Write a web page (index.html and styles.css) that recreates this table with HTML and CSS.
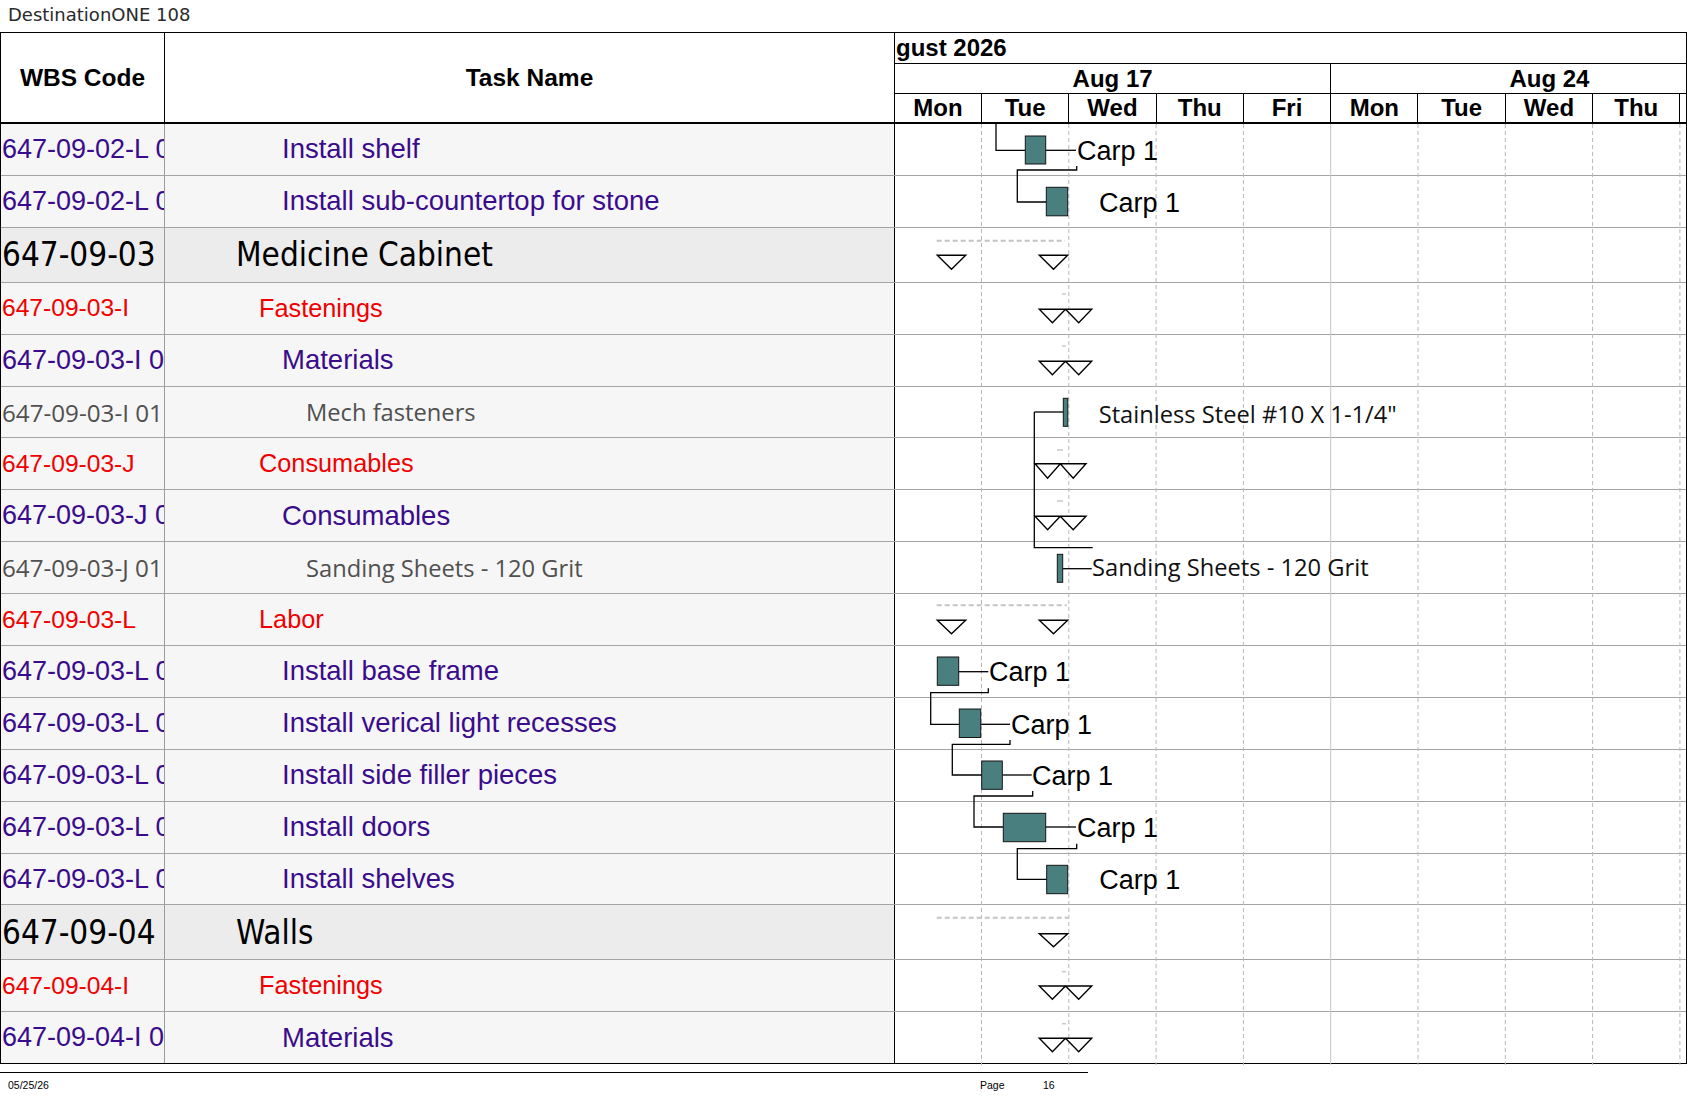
FILE: index.html
```html
<!DOCTYPE html>
<html lang="en">
<head>
<meta charset="utf-8">
<title>DestinationONE 108</title>
<link rel="stylesheet" href="styles.css">
</head>
<body>
<div class="title">DestinationONE 108</div>
<div class="gantt">
  <div class="head">
    <div class="h-wbs">WBS Code</div>
    <div class="h-task">Task Name</div>
    <div class="h-chart">
      <div class="month">gust 2026</div>
      <div class="weeks">
        <div class="wk">Aug 17</div>
        <div class="wk wk-last"><span class="wk-in">Aug 24</span></div>
      </div>
      <div class="days">
        <div class="d">Mon</div><div class="d">Tue</div><div class="d">Wed</div><div class="d">Thu</div><div class="d">Fri</div>
        <div class="d">Mon</div><div class="d">Tue</div><div class="d">Wed</div><div class="d">Thu</div><div class="d d-end"></div>
      </div>
    </div>
  </div>
  <div class="body">
    <div class="row purple"><div class="wbs">647-09-02-L 01</div><div class="task lv3">Install shelf</div><div class="chart"></div></div>
    <div class="row purple"><div class="wbs">647-09-02-L 01</div><div class="task lv3">Install sub-countertop for stone</div><div class="chart"></div></div>
    <div class="row sum"><div class="wbs">647-09-03</div><div class="task lv1">Medicine Cabinet</div><div class="chart"></div></div>
    <div class="row red"><div class="wbs">647-09-03-I</div><div class="task lv2">Fastenings</div><div class="chart"></div></div>
    <div class="row purple"><div class="wbs">647-09-03-I 01</div><div class="task lv3">Materials</div><div class="chart"></div></div>
    <div class="row gray"><div class="wbs">647-09-03-I 01</div><div class="task lv4">Mech fasteners</div><div class="chart"></div></div>
    <div class="row red"><div class="wbs">647-09-03-J</div><div class="task lv2">Consumables</div><div class="chart"></div></div>
    <div class="row purple"><div class="wbs">647-09-03-J 01</div><div class="task lv3">Consumables</div><div class="chart"></div></div>
    <div class="row gray"><div class="wbs">647-09-03-J 01</div><div class="task lv4">Sanding Sheets - 120 Grit</div><div class="chart"></div></div>
    <div class="row red"><div class="wbs">647-09-03-L</div><div class="task lv2">Labor</div><div class="chart"></div></div>
    <div class="row purple"><div class="wbs">647-09-03-L 01</div><div class="task lv3">Install base frame</div><div class="chart"></div></div>
    <div class="row purple"><div class="wbs">647-09-03-L 02</div><div class="task lv3">Install verical light recesses</div><div class="chart"></div></div>
    <div class="row purple"><div class="wbs">647-09-03-L 03</div><div class="task lv3">Install side filler pieces</div><div class="chart"></div></div>
    <div class="row purple"><div class="wbs">647-09-03-L 04</div><div class="task lv3">Install doors</div><div class="chart"></div></div>
    <div class="row purple"><div class="wbs">647-09-03-L 05</div><div class="task lv3">Install shelves</div><div class="chart"></div></div>
    <div class="row sum"><div class="wbs">647-09-04</div><div class="task lv1">Walls</div><div class="chart"></div></div>
    <div class="row red"><div class="wbs">647-09-04-I</div><div class="task lv2">Fastenings</div><div class="chart"></div></div>
    <div class="row purple"><div class="wbs">647-09-04-I 01</div><div class="task lv3">Materials</div><div class="chart"></div></div>

    <svg class="overlay" width="791" height="941" viewBox="0 0 791 941" xmlns="http://www.w3.org/2000/svg">
      <g class="grid">
        <line x1="86.5" y1="0" x2="86.5" y2="941"/>
        <line x1="173.8" y1="0" x2="173.8" y2="941"/>
        <line x1="261.1" y1="0" x2="261.1" y2="941"/>
        <line x1="348.4" y1="0" x2="348.4" y2="941"/>
        <line x1="523" y1="0" x2="523" y2="941"/>
        <line x1="610.3" y1="0" x2="610.3" y2="941"/>
        <line x1="697.6" y1="0" x2="697.6" y2="941"/>
        <line x1="784.9" y1="0" x2="784.9" y2="941"/>
      </g>
      <line class="wkline" x1="435.7" y1="0" x2="435.7" y2="941"/>

      <!-- summary bars -->
      <line class="sumline" x1="41.7" y1="116.7" x2="170" y2="116.7"/>
      <line class="sumline" x1="41.7" y1="481.3" x2="171.7" y2="481.3"/>
      <line class="sumline" x1="41.7" y1="793.7" x2="173.3" y2="793.7"/>

      <!-- tiny ticks -->
      <g class="tick">
        <line x1="167" y1="170" x2="171" y2="170"/>
        <line x1="167" y1="222" x2="171" y2="222"/>
        <line x1="162" y1="326" x2="168" y2="326"/>
        <line x1="162" y1="377" x2="168" y2="377"/>
        <line x1="167" y1="847.7" x2="171" y2="847.7"/>
        <line x1="167" y1="899.7" x2="171" y2="899.7"/>
      </g>

      <!-- triangles -->
      <g class="tri">
        <path d="M42.3,131.3 L70.7,131.3 L56.5,145.3 Z"/>
        <path d="M144.3,131.3 L172.7,131.3 L158.5,145.3 Z"/>
        <path d="M144.3,185.3 L196.7,185.3 L183.7,198.7 L170.5,185.3 L157.4,198.7 Z"/>
        <path d="M144.3,237.3 L196.7,237.3 L183.7,250.7 L170.5,237.3 L157.4,250.7 Z"/>
        <path d="M140,339.7 L191,339.7 L178.2,354.3 L165.3,339.7 L152.6,354.3 Z"/>
        <path d="M140,392.3 L191,392.3 L178.2,405.7 L165.3,392.3 L152.6,405.7 Z"/>
        <path d="M42.3,496.3 L70.7,496.3 L56.5,509.7 Z"/>
        <path d="M144.3,496.3 L172.7,496.3 L158.5,509.7 Z"/>
        <path d="M144.3,809.7 L172.7,809.7 L158.5,822.7 Z"/>
        <path d="M144.3,862 L196.7,862 L183.7,875.3 L170.5,862 L157.4,875.3 Z"/>
        <path d="M144.3,914.3 L196.7,914.3 L183.7,927.7 L170.5,914.3 L157.4,927.7 Z"/>
      </g>

      <!-- connectors -->
      <g class="conn">
        <polyline points="101,0 101,26.3 130.3,26.3"/>
        <polyline points="150.7,26.3 181,26.3"/>
        <polyline points="181.7,42 181.7,46 122.3,46 122.3,78 151.3,78"/>
        <polyline points="139.3,288 168.3,288"/>
        <polyline points="139.3,288 139.3,423.7 197.7,423.7"/>
        <polyline points="167.7,444.7 196.7,444.7"/>
        <polyline points="63.7,547.7 93.3,547.7"/>
        <polyline points="93.3,564.3 93.3,568.7 35.7,568.7 35.7,600.3 64.3,600.3"/>
        <polyline points="85.7,600.3 115,600.3"/>
        <polyline points="115,616 115,620.3 57.3,620.3 57.3,651 86.7,651"/>
        <polyline points="107.3,651 136.7,651"/>
        <polyline points="137.7,667 137.7,672 79,672 79,703 108.3,703"/>
        <polyline points="150.7,703 181,703"/>
        <polyline points="181.7,719.7 181.7,724.7 122.3,724.7 122.3,755.3 151.7,755.3"/>
      </g>

      <!-- bars -->
      <g class="bar">
        <rect x="130.3" y="12" width="20.4" height="28"/>
        <rect x="151.3" y="63.3" width="21.4" height="28.5"/>
        <rect x="168.3" y="274.3" width="4.5" height="28"/>
        <rect x="162.3" y="430.3" width="5.4" height="28"/>
        <rect x="42.3" y="533" width="21.4" height="28.3"/>
        <rect x="64.3" y="585" width="21.4" height="28.5"/>
        <rect x="86.7" y="637" width="20.6" height="28.3"/>
        <rect x="108.3" y="689.3" width="42.4" height="28.4"/>
        <rect x="151.7" y="741.3" width="21" height="28.4"/>
      </g>

      <!-- labels -->
      <text class="lbl" x="182" y="36">Carp 1</text>
      <text class="lbl" x="204" y="87.5">Carp 1</text>
      <text class="lbl2" x="203.7" y="298.7">Stainless Steel #10 X 1-1/4"</text>
      <text class="lbl2" x="197" y="452">Sanding Sheets - 120 Grit</text>
      <text class="lbl" x="94" y="557.3">Carp 1</text>
      <text class="lbl" x="116" y="609.9">Carp 1</text>
      <text class="lbl" x="137" y="660.6">Carp 1</text>
      <text class="lbl" x="182" y="712.6">Carp 1</text>
      <text class="lbl" x="204.3" y="764.9">Carp 1</text>
    </svg>
  </div>
</div>
<div class="footer">
  <div class="f-date">05/25/26</div>
  <div class="f-page">Page</div>
  <div class="f-num">16</div>
</div>
</body>
</html>
```

FILE: styles.css
```css
* {
  box-sizing: border-box;
}

body {
  margin: 0;
  width: 1687px;
  background: #ffffff;
  color: #000000;
  font-family: "Liberation Sans", Arial, sans-serif;
}

.title {
  height: 32px;
  padding-left: 8px;
  font-family: "DejaVu Sans", sans-serif;
  font-size: 18px;
  line-height: 30px;
  color: #2a2a2a;
  white-space: nowrap;
}

.gantt {
  width: 1687px;
  border-top: 1px solid #000;
  border-left: 1px solid #000;
  border-right: 1px solid #000;
}

/* ---------- header ---------- */
.head {
  display: grid;
  grid-template-columns: 164px 730px 1fr;
  height: 91px;
  border-bottom: 2px solid #000;
}

.h-wbs,
.h-task {
  display: flex;
  align-items: center;
  justify-content: center;
  border-right: 1px solid #000;
  font-weight: bold;
  font-size: 24.5px;
}

.h-chart {
  display: flex;
  flex-direction: column;
  font-weight: bold;
  font-size: 24px;
  overflow: hidden;
}

.month {
  height: 31px;
  border-bottom: 1px solid #000;
  padding-left: 1px;
  display: flex;
  align-items: center;
  white-space: nowrap;
}

.weeks {
  height: 30px;
  border-bottom: 1px solid #000;
  display: grid;
  grid-template-columns: 436.2px 1fr;
}

.wk {
  display: flex;
  align-items: center;
  justify-content: center;
  border-right: 1px solid #000;
  white-space: nowrap;
}

.wk-last {
  border-right: none;
  justify-content: flex-start;
  overflow: hidden;
}

.wk-in {
  display: block;
  flex: 0 0 436.5px;
  text-align: center;
}

.days {
  height: 28px;
  display: grid;
  grid-template-columns: 87px repeat(8, 87.3px) 1fr;
}

.d {
  display: flex;
  align-items: center;
  justify-content: center;
  border-right: 1px solid #000;
}

.d-end {
  border-right: none;
}

/* ---------- body rows ---------- */
.body {
  position: relative;
}

.row {
  display: grid;
  grid-template-columns: 164px 730px 1fr;
  height: 51.9px;
  border-bottom: 1px solid #a4a4a4;
}

.row:last-of-type {
  border-bottom-color: #000;
}

.row.sum {
  height: 55px;
}

.wbs,
.task {
  display: flex;
  align-items: center;
  white-space: nowrap;
  overflow: hidden;
  background: #f6f6f6;
}

.wbs {
  padding-left: 1px;
  border-right: 1px solid #9c9c9c;
}

.task {
  border-right: 1px solid #000;
}

.chart {
  background: #ffffff;
}

.lv1 { padding-left: 71px; }
.lv2 { padding-left: 94px; }
.lv3 { padding-left: 117px; }
.lv4 { padding-left: 141px; }

.purple {
  color: #3a0c8c;
  font-size: 27.5px;
}

.purple .wbs {
  font-size: 27px;
}

.red {
  color: #f00000;
  font-size: 25.3px;
}

.red .wbs {
  font-size: 24.6px;
}

.gray {
  color: #505050;
  font-family: "Open Sans", sans-serif;
  font-size: 23.7px;
}

.gray .wbs {
  font-size: 24.2px;
}

.sum {
  color: #000;
  font-family: "DejaVu Sans Condensed", "DejaVu Sans", "Open Sans", sans-serif;
  font-stretch: condensed;
  font-size: 33px;
}

.sum .wbs,
.sum .task {
  background: #ececec;
}

.sum .wbs {
  padding-left: 1px;
}

/* ---------- chart overlay (gantt drawing canvas) ---------- */
.overlay {
  position: absolute;
  left: 894px;
  top: 0;
  pointer-events: none;
}

.grid line {
  stroke: #b8b8b8;
  stroke-width: 1;
  stroke-dasharray: 4 3;
}

.wkline {
  stroke: #c6c6c6;
  stroke-width: 1;
}

.sumline {
  stroke: #c4c4c4;
  stroke-width: 2;
  stroke-dasharray: 5 3;
}

.tick line {
  stroke: #c8c8c8;
  stroke-width: 1.5;
}

.tri path {
  fill: #ffffff;
  stroke: #000;
  stroke-width: 1.4;
  stroke-linejoin: miter;
}

.conn polyline {
  fill: none;
  stroke: #000;
  stroke-width: 1.3;
}

.bar rect {
  fill: #4a7f80;
  stroke: #141414;
  stroke-width: 1;
}

.lbl {
  font-family: "Liberation Sans", Arial, sans-serif;
  font-size: 27px;
  fill: #000;
}

.lbl2 {
  font-family: "Open Sans", sans-serif;
  font-size: 23.7px;
  fill: #111;
}

/* ---------- footer ---------- */
.footer {
  margin-top: 8px;
  width: 1088px;
  border-top: 1px solid #000;
  padding-top: 6px;
  display: grid;
  grid-template-columns: 980px 63px auto;
  font-family: "Liberation Sans", Arial, sans-serif;
  font-size: 10.5px;
  line-height: 12px;
  color: #000;
}

.f-date {
  padding-left: 8px;
}
```
